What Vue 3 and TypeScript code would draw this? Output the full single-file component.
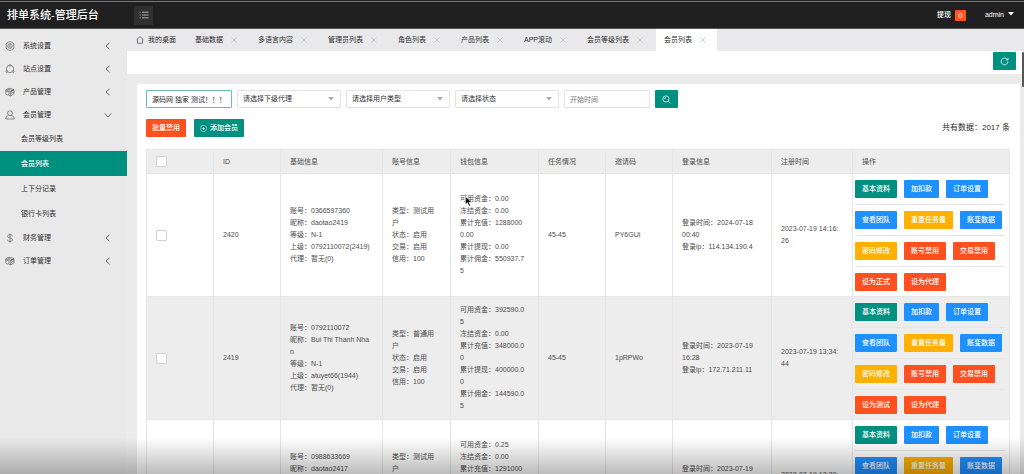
<script setup lang="ts">
import { ref } from 'vue'

interface MenuItem {
  label: string
  icon: 'gear' | 'circle' | 'box' | 'user' | 'dollar'
  children?: string[]
}

interface Member {
  id: number
  base: string[]
  account: string[]
  wallet: string[]
  task: string
  code: string
  login: string[]
  registered: string[]
  mode: string
}

interface Action {
  label: string
  tone: string
}

const menu: MenuItem[] = [
  { label: '系统设置', icon: 'gear' },
  { label: '站点设置', icon: 'circle' },
  { label: '产品管理', icon: 'box' },
  { label: '会员管理', icon: 'user', children: ['会员等级列表', '会员列表', '上下分记录', '银行卡列表'] },
  { label: '财务管理', icon: 'dollar' },
  { label: '订单管理', icon: 'box' },
]

const tabs = ['基础数据', '多语言内容', '管理员列表', '角色列表', '产品列表', 'APP滚动', '会员等级列表', '会员列表']
const current = ref('会员列表')

const keyword = ref('源码网 独家 测试！！！')
const startTime = ref('')
const filters = ['请选择下级代理', '请选择用户类型', '请选择状态']

const columns = [
  { key: 'id', label: 'ID' },
  { key: 'base', label: '基础信息' },
  { key: 'account', label: '账号信息' },
  { key: 'wallet', label: '钱包信息' },
  { key: 'task', label: '任务情况' },
  { key: 'code', label: '邀请码' },
  { key: 'login', label: '登录信息' },
  { key: 'registered', label: '注册时间' },
  { key: 'actions', label: '操作' },
]

const members: Member[] = [
  {
    id: 2420,
    base: ['账号：0366597360', '昵称：daotao2419', '等级：N-1', '上级：0792110072(2419)', '代理：暂无(0)'],
    account: ['类型：测试用', '户', '状态：启用', '交易：启用', '信用：100'],
    wallet: ['可用资金：0.00', '冻结资金：0.00', '累计充值：1288000', '0.00', '累计提现：0.00', '累计佣金：550937.7', '5'],
    task: '45-45',
    code: 'PY6GUi',
    login: ['登录时间：2024-07-18', '00:40', '登录ip：114.134.190.4'],
    registered: ['2023-07-19 14:16:', '26'],
    mode: '设为正式',
  },
  {
    id: 2419,
    base: ['账号：0792110072', '昵称：Bui Thi Thanh Nha', 'n', '等级：N-1', '上级：atuyet66(1944)', '代理：暂无(0)'],
    account: ['类型：普通用', '户', '状态：启用', '交易：启用', '信用：100'],
    wallet: ['可用资金：392590.0', '5', '冻结资金：0.00', '累计充值：348000.0', '0', '累计提现：400000.0', '0', '累计佣金：144590.0', '5'],
    task: '45-45',
    code: '1pRPWo',
    login: ['登录时间：2023-07-19', '16:28', '登录ip：172.71.211.11'],
    registered: ['2023-07-19 13:34:', '44'],
    mode: '设为测试',
  },
  {
    id: 2417,
    base: ['账号：0988633669', '昵称：daotao2417', '等级：N-1', '上级：0792110072(2419)', '代理：暂无(0)'],
    account: ['类型：测试用', '户', '状态：启用', '交易：启用', '信用：100'],
    wallet: ['可用资金：0.25', '冻结资金：0.00', '累计充值：1291000', '0.00', '累计提现：0.00', '累计佣金：550937.7', '5'],
    task: '45-45',
    code: 'KD3TRe',
    login: ['登录时间：2023-07-19', '13:20', '登录ip：172.71.211.11'],
    registered: ['2023-07-19 13:20:', '36'],
    mode: '设为正式',
  },
]

function actionRows(m: Member): Action[][] {
  return [
    [{ label: '基本资料', tone: 'green' }, { label: '加扣款', tone: 'blue' }, { label: '订单设置', tone: 'blue' }],
    [{ label: '查看团队', tone: 'blue' }, { label: '重置任务量', tone: 'amber' }, { label: '账变数据', tone: 'blue' }],
    [{ label: '密码修改', tone: 'amber' }, { label: '账号禁用', tone: 'red' }, { label: '交易禁用', tone: 'red' }],
    [{ label: m.mode, tone: 'red' }, { label: '设为代理', tone: 'red' }],
  ]
}
</script>

<template>
  <div class="app">
    <header class="top">
      <h1 class="brand">排单系统-管理后台</h1>
      <button class="toggle" type="button" aria-label="菜单">
        <svg width="10" height="8" viewBox="0 0 10 8" fill="none" stroke="currentColor">
          <path d="M3 1.2h6.5M3 4h6.5M3 6.8h6.5M.6 1.2h1M.6 4h1M.6 6.8h1" stroke-width=".8" />
        </svg>
      </button>
      <a class="cash" href="#">提现<span class="count">0</span></a>
      <button class="account" type="button">
        admin
        <svg width="6" height="4" viewBox="0 0 6 4"><path d="M0 0h6L3 3.6z" fill="currentColor" /></svg>
      </button>
    </header>

    <div class="body">
      <nav class="side">
        <template v-for="item in menu" :key="item.label">
          <a class="item" href="#">
            <svg class="glyph" viewBox="0 0 20 20" fill="none" stroke="currentColor" stroke-width="1.3">
              <template v-if="item.icon === 'gear'">
                <path d="M7.500 1.500h5l1.500 2 2.500.5 1.500 3.500-.8 2.500.8 2.500-1.500 3.500-2.500.5-1.500 2h-5l-1.500-2-2.500-.5L2 12.500l.8-2.500L2 7.500 3.500 4 6 3.500z" />
                <circle cx="10" cy="10" r="4.600" />
                <path d="M12 8.300c-2-1.600-4 0-3.700 2 .3 1.700 2.300 2.300 3.700 1.200" />
              </template>
              <template v-else-if="item.icon === 'circle'">
                <circle cx="10" cy="10" r="7.300" />
                <g fill="#e9e9e9">
                  <circle cx="10" cy="2.800" r="1.700" />
                  <circle cx="3.400" cy="15" r="1.800" />
                  <circle cx="16.600" cy="15" r="1.800" />
                </g>
              </template>
              <template v-else-if="item.icon === 'box'">
                <path d="M1.500 6 8 2.500l10 2.600-6.500 4zM11.500 9.100 18 5.100v8.400L11.500 18zM18 9.300l-6.500 4.200M5 4.200l9.500 3M1.500 6v4M7 16l4.500 2" />
                <circle cx="5" cy="12.500" r="3.500" />
              </template>
              <template v-else-if="item.icon === 'user'">
                <circle cx="10" cy="6.500" r="4.800" />
                <path d="M7 10.500c-3.500 1.200-5.200 4-5.500 7.500h17c-.3-3.500-2-6.300-5.500-7.500" />
              </template>
              <path v-else d="M15 6.500C14.500 4.300 12.700 3.300 10 3.300S5.200 4.600 5.200 6.700c0 4.700 9.900 2 9.900 6.600 0 2.200-2.100 3.500-5.100 3.500s-5-1.200-5.200-3.500M10 1v18" />
            </svg>
            <span>{{ item.label }}</span>
            <svg class="arrow" :class="{ open: item.children }" viewBox="0 0 8 8" fill="none" stroke="currentColor">
              <path d="M5.500 .8 2 4l3.500 3.200" stroke-width=".9" />
            </svg>
          </a>
          <a
            v-for="child in item.children"
            :key="child"
            class="sub"
            :class="{ active: child === current }"
            href="#"
          >{{ child }}</a>
        </template>
      </nav>

      <main class="main">
        <div class="tabs">
          <a class="home" href="#">
            <svg width="8" height="8" viewBox="0 0 16 16" fill="none" stroke="currentColor" stroke-width="1.200">
              <path d="M1 7.500 8 1.200l7 6.300M3 6.500v8h10v-8" />
            </svg>
            我的桌面
          </a>
          <div v-for="tab in tabs" :key="tab" class="tab" :class="{ active: tab === current }">
            <a href="#">{{ tab }}</a>
            <button class="close" type="button" :aria-label="'关闭' + tab">
              <svg width="6" height="6" viewBox="0 0 6 6" stroke="currentColor" stroke-width=".7"><path d="m.5.5 5 5m0-5-5 5" /></svg>
            </button>
          </div>
        </div>

        <div class="crumb">
          <button class="square" type="button" aria-label="刷新">
            <svg width="9" height="9" viewBox="0 0 16 16" fill="none" stroke="currentColor" stroke-width="1.300">
              <path d="M14 8a6 6 0 1 1-2-4.500L14 5M14.200 1.500V5.200h-3.700" />
            </svg>
          </button>
        </div>

        <section class="card">
          <form class="filters" @submit.prevent>
            <input v-model="keyword" class="field focus" type="text" aria-label="关键词">
            <label v-for="f in filters" :key="f" class="pick">
              <select class="field" :aria-label="f"><option>{{ f }}</option></select>
              <svg class="caret" width="6" height="4" viewBox="0 0 6 4"><path d="M0 0h6L3 3.500z" fill="currentColor" /></svg>
            </label>
            <input v-model="startTime" class="field" type="text" placeholder="开始时间" aria-label="开始时间">
            <button class="square" type="submit" aria-label="搜索">
              <svg width="9" height="9" viewBox="0 0 16 16" fill="none" stroke="currentColor" stroke-width="1.300">
                <circle cx="7" cy="7" r="5.500" /><path d="m11 11 4 4M4.500 7A2.500 2.500 0 0 1 7 4.500" />
              </svg>
            </button>
          </form>

          <div class="bulk">
            <button class="btn red" type="button">批量禁用</button>
            <button class="btn green" type="button">
              <svg width="7" height="7" viewBox="0 0 14 14" fill="none" stroke="currentColor">
                <circle cx="7" cy="7" r="6.300" stroke-width=".9" /><path d="M7 4v6M4 7h6" stroke-width="1.200" />
              </svg>
              添加会员
            </button>
            <span class="total">共有数据：2017 条</span>
          </div>

          <table class="grid">
            <colgroup>
              <col class="c-check">
              <col v-for="c in columns" :key="c.key" :class="'c-' + c.key">
            </colgroup>
            <thead>
              <tr>
                <th><input class="check" type="checkbox" aria-label="全选"></th>
                <th v-for="c in columns" :key="c.key" scope="col">{{ c.label }}</th>
              </tr>
            </thead>
            <tbody>
              <tr v-for="m in members" :key="m.id">
                <td><input class="check" type="checkbox" :aria-label="'选择 ' + m.id"></td>
                <td>{{ m.id }}</td>
                <td><div v-for="(l, i) in m.base" :key="i">{{ l }}</div></td>
                <td><div v-for="(l, i) in m.account" :key="i">{{ l }}</div></td>
                <td><div v-for="(l, i) in m.wallet" :key="i">{{ l }}</div></td>
                <td>{{ m.task }}</td>
                <td>{{ m.code }}</td>
                <td><div v-for="(l, i) in m.login" :key="i">{{ l }}</div></td>
                <td><div v-for="(l, i) in m.registered" :key="i">{{ l }}</div></td>
                <td class="ops">
                  <div v-for="(row, i) in actionRows(m)" :key="i" class="oprow">
                    <button v-for="a in row" :key="a.label" class="btn" :class="a.tone" type="button">{{ a.label }}</button>
                  </div>
                </td>
              </tr>
            </tbody>
          </table>
        </section>
        <div class="thumb"></div>
      </main>
    </div>

    <div class="shade"></div>
    <svg class="pointer" width="7" height="11" viewBox="0 0 14 22">
      <path d="M1 1v16l4-3.500 3 7 3-1.300-3-6.700h5.500z" fill="#111" stroke="#fff" />
    </svg>
  </div>
</template>

<style>
body {
  margin: 0;
}
</style>

<style scoped>
.app {
  position: relative;
  display: flex;
  flex-direction: column;
  height: 100vh;
  overflow: hidden;
  background: #ebebeb;
  color: #2c2c2c;
  font: 7px/12px "Liberation Sans", "Noto Sans CJK SC", sans-serif;
}
.app *,
.app *::before {
  box-sizing: border-box;
}
a {
  color: inherit;
  text-decoration: none;
}
button {
  display: inline-flex;
  align-items: center;
  justify-content: center;
  margin: 0;
  padding: 0;
  border: 0;
  background: none;
  color: inherit;
  font: inherit;
  cursor: pointer;
}

.top {
  display: flex;
  flex: none;
  align-items: center;
  height: 29px;
  padding: 2px 10px 0 7px;
  border-bottom: 1px solid #555;
  background: linear-gradient(#222 1px, #777 1px, #777 2px, #202020 2px);
  color: #fff;
}
.brand {
  width: 127px;
  margin: 0;
  font-size: 11px;
  font-weight: 500;
  line-height: 16px;
}
.toggle {
  width: 19px;
  height: 19px;
  background: #303030;
  color: #ccc;
}
.cash {
  display: flex;
  align-items: center;
  gap: 4px;
  margin-left: auto;
  font-weight: 500;
}
.count {
  width: 11px;
  border-radius: 1px;
  background: #ff5722;
  line-height: 11px;
  text-align: center;
}
.account {
  gap: 4px;
  margin-left: 19px;
}
.account svg {
  margin-bottom: 3px;
}

.body {
  display: flex;
  flex: 1;
  min-height: 0;
}
.side {
  flex: none;
  width: 127px;
  padding-top: 5px;
  background: #e9e9e9;
}
.item {
  display: flex;
  align-items: center;
  height: 23px;
  padding: 0 15px 0 5px;
}
.glyph {
  width: 10px;
  height: 10px;
  margin-right: 8px;
  color: #555;
}
.arrow {
  width: 8px;
  height: 8px;
  margin-left: auto;
  color: #555;
}
.arrow.open {
  transform: rotate(-90deg);
}
.sub {
  display: block;
  height: 25px;
  padding-left: 21px;
  line-height: 25px;
}
.sub.active {
  background: #009080;
  color: #fff;
  font-weight: 500;
}

.main {
  position: relative;
  flex: 1;
  min-width: 0;
  overflow: hidden;
}
.tabs {
  display: flex;
  height: 22px;
  background: #e9e9eb;
}
.home {
  display: flex;
  align-items: center;
  gap: 4px;
  width: 60px;
  padding-left: 9px;
}
.tab {
  display: flex;
  align-items: center;
  gap: 8px;
  margin-right: 2px;
  padding: 0 11px 0 8px;
}
.tab.active {
  background: #fff;
}
.close {
  color: #bbb;
}
.crumb {
  display: flex;
  justify-content: flex-end;
  height: 23px;
  padding: 1px 8px 0;
  background: #fff;
}
.square {
  width: 23px;
  height: 18px;
  border-radius: 1px;
  background: #009080;
  color: #fff;
}
.card {
  margin: 10px 4px 0 10px;
  padding: 6px 10px 0 9px;
  border-radius: 2px;
  background: #fff;
}
.filters {
  display: flex;
  gap: 5px;
}
.field {
  width: 86px;
  height: 18px;
  margin: 0;
  padding: 0 0 0 5px;
  border: 1px solid #e4e4e4;
  border-radius: 1px;
  outline: 0;
  background: #fff;
  color: #2c2c2c;
  font: inherit;
  appearance: none;
}
.field::placeholder {
  color: #777;
  opacity: 1;
}
.field.focus {
  border-color: #6dbab0;
}
.pick {
  position: relative;
  display: flex;
}
.pick .field {
  width: 104px;
}
.caret {
  position: absolute;
  top: 7px;
  right: 7px;
  color: #aaa;
  pointer-events: none;
}
.bulk {
  display: flex;
  align-items: center;
  gap: 8px;
  margin: 11px 0 12px;
}
.btn {
  gap: 3px;
  height: 18px;
  padding: 0 7px;
  border-radius: 1px;
  color: #fff;
  font-weight: 500;
  line-height: 18px;
  white-space: nowrap;
}
.bulk .btn {
  padding: 0 6px;
}
.green {
  background: #009080;
}
.blue {
  background: #1e90ff;
}
.amber {
  background: #ffb000;
}
.red {
  background: #ff5020;
}
.total {
  margin-left: auto;
  font-size: 8px;
}

.grid {
  width: 100%;
  border-collapse: collapse;
  table-layout: fixed;
  color: #4c4c4c;
}
.c-check,
.c-id,
.c-task,
.c-code {
  width: 67px;
}
.c-base {
  width: 102px;
}
.c-account {
  width: 68px;
}
.c-wallet {
  width: 88px;
}
.c-login {
  width: 99px;
}
.c-registered {
  width: 81px;
}
th,
td {
  padding: 0 0 0 9px;
  border: 1px solid #e6e6e6;
  font-weight: 400;
  text-align: left;
  vertical-align: middle;
  white-space: nowrap;
}
th {
  height: 24px;
  background: #ededed;
}
tbody tr:nth-child(even) {
  background: #ededed;
}
.check {
  display: block;
  width: 11px;
  height: 11px;
  margin: 0;
  border: 1px solid #d2d2d2;
  border-radius: 1px;
  background: #fff;
  appearance: none;
}
td.ops {
  padding: 0 4px 0 2px;
}
.oprow {
  display: flex;
  gap: 7px;
  padding: 6px 0;
  border-bottom: 1px solid #e6e6e6;
}
.oprow:last-child {
  padding-bottom: 5px;
  border-bottom: 0;
}
.thumb {
  position: absolute;
  top: 23px;
  right: 0;
  width: 2px;
  height: 35px;
  border-radius: 1px;
  background: #555;
}
.shade {
  position: absolute;
  right: 0;
  bottom: 0;
  left: 0;
  height: 36px;
  background: linear-gradient(transparent, rgba(0, 0, 0, .26));
  pointer-events: none;
}
.pointer {
  position: absolute;
  top: 196px;
  left: 465px;
  pointer-events: none;
}
</style>
